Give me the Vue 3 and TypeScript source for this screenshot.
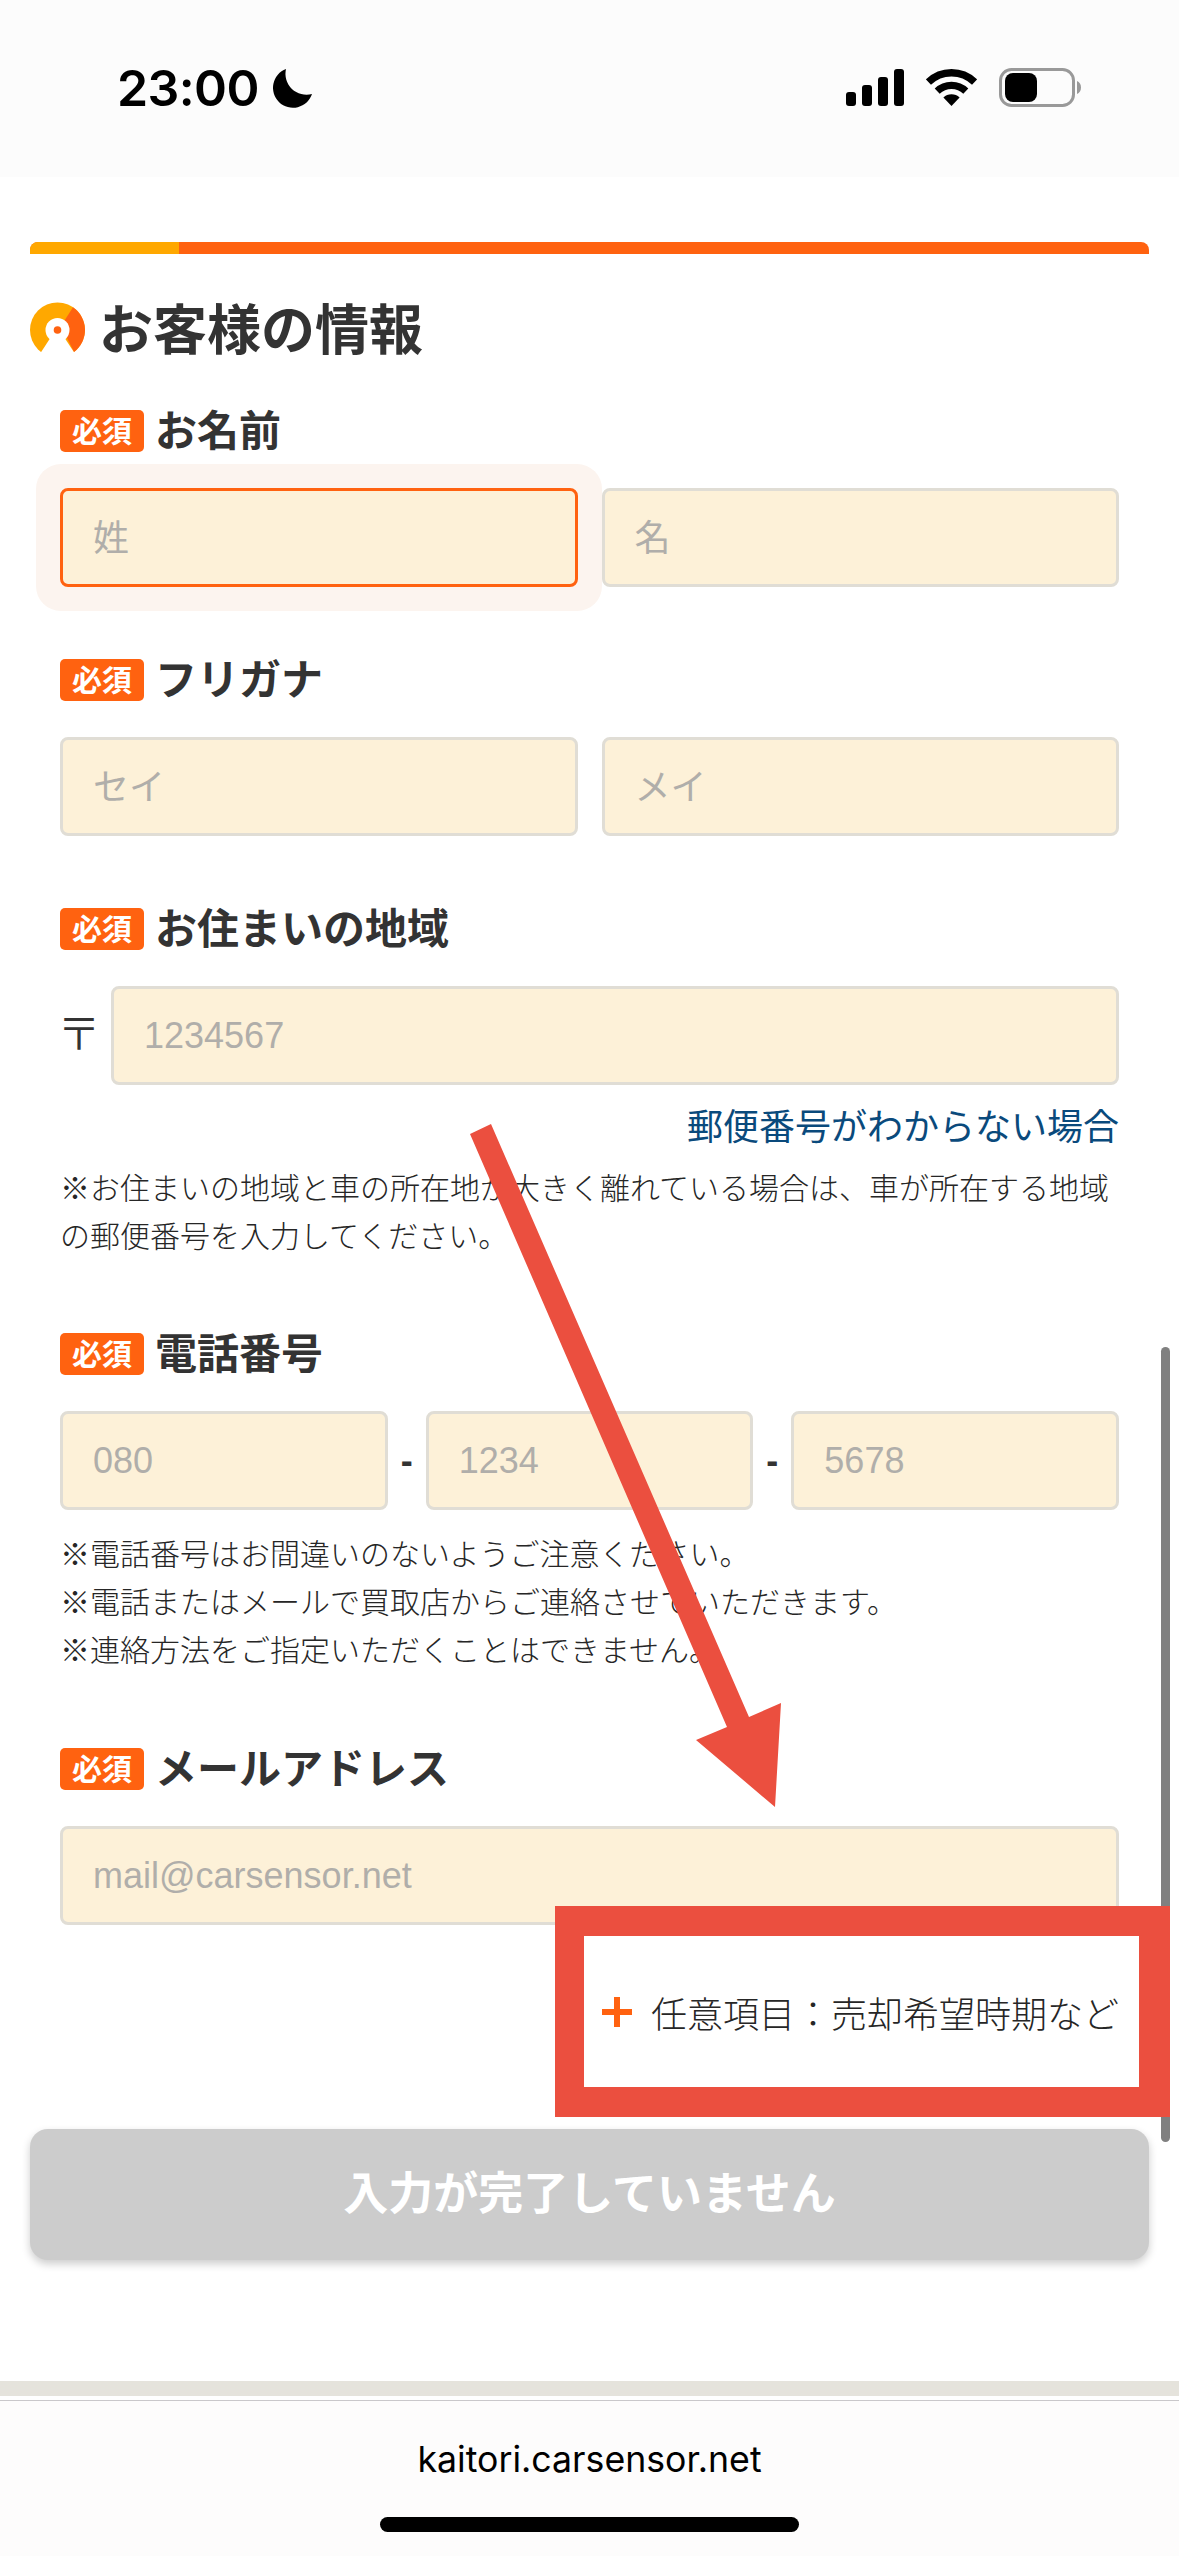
<script setup lang="ts">
const phoneNotes: string[] = [
  '※電話番号はお間違いのないようご注意ください。',
  '※電話またはメールで買取店からご連絡させていただきます。',
  '※連絡方法をご指定いただくことはできません。',
];
</script>

<template>
  <div class="screen">
    <header class="status">
      <div class="status__left">
        <span class="status__time">23:00</span>
        <svg class="status__moon" width="39" height="39" viewBox="0 0 39 39">
          <path d="M13 0A20 20 0 1 0 39 25A21 21 0 0 1 13 0Z" />
        </svg>
      </div>
      <div class="status__right">
        <svg width="58" height="37" viewBox="0 0 58 37">
          <rect x="0" y="23" width="10" height="14" rx="3" />
          <rect x="16" y="16" width="10" height="21" rx="3" />
          <rect x="32" y="8" width="10" height="29" rx="3" />
          <rect x="48" y="0" width="10" height="37" rx="3" />
        </svg>
        <svg class="status__wifi" width="51" height="37" viewBox="0 0 51 37">
          <path d="M2.4 13.1A33.2 33.2 0 0 1 48.6 13.1" fill="none" stroke="#000" stroke-width="7.4" />
          <path d="M11.2 22.2A20.6 20.6 0 0 1 39.8 22.2" fill="none" stroke="#000" stroke-width="7.2" />
          <path d="M25.5 37L17.4 28.6A11.7 11.7 0 0 1 33.6 28.6Z" />
        </svg>
        <svg class="status__battery" width="82" height="39" viewBox="0 0 82 39">
          <rect x="1.5" y="1.5" width="73" height="36" rx="11" fill="none" stroke="#999" stroke-width="3" />
          <rect x="6" y="5" width="32" height="29" rx="8" />
          <path d="M78 13C80.5 14 82 16.5 82 19.5C82 22.5 80.5 25 78 26Z" fill="#999" />
        </svg>
      </div>
    </header>

    <main class="form">
      <div class="progress"><span class="progress__done"></span></div>

      <h1 class="title">
        <svg class="title__icon" width="55" height="50" viewBox="0 0 55 50">
          <circle cx="27.5" cy="28" r="27.5" fill="#ffa800" />
          <path d="M31 24L43 5.3A27.5 27.5 0 0 1 44 50Z" fill="#ff6210" />
          <path d="M27.5 25L10.5 51H44.5Z" fill="#fff" />
          <circle cx="27.5" cy="28" r="12" fill="#fff" />
          <circle cx="27.5" cy="28" r="3.8" fill="#ff6210" />
        </svg>
        お客様の情報
      </h1>

      <section class="field field--first">
        <div class="label"><span class="badge">必須</span>お名前</div>
        <div class="inputs">
          <input class="input input--focus" placeholder="姓" />
          <input class="input" placeholder="名" />
        </div>
      </section>

      <section class="field">
        <div class="label"><span class="badge">必須</span>フリガナ</div>
        <div class="inputs">
          <input class="input" placeholder="セイ" />
          <input class="input" placeholder="メイ" />
        </div>
      </section>

      <section class="field">
        <div class="label"><span class="badge">必須</span>お住まいの地域</div>
        <div class="inputs inputs--zip">
          <span class="zip-mark">〒</span>
          <input class="input input--latin" placeholder="1234567" />
        </div>
        <a class="zip-link">郵便番号がわからない場合</a>
        <p class="note note--zip">※お住まいの地域と車の所在地が大きく離れている場合は、車が所在する地域の郵便番号を入力してください。</p>
      </section>

      <section class="field field--phone">
        <div class="label"><span class="badge">必須</span>電話番号</div>
        <div class="inputs inputs--phone">
          <input class="input input--latin" placeholder="080" />
          <span class="dash">-</span>
          <input class="input input--latin" placeholder="1234" />
          <span class="dash">-</span>
          <input class="input input--latin" placeholder="5678" />
        </div>
        <p class="note note--phone">
          <span v-for="line in phoneNotes" :key="line" class="note__line">{{ line }}</span>
        </p>
      </section>

      <section class="field field--mail">
        <div class="label"><span class="badge">必須</span>メールアドレス</div>
        <div class="inputs">
          <input class="input input--latin" placeholder="mail@carsensor.net" />
        </div>
      </section>

      <div class="optional">
        <span class="optional__plus"></span>
        任意項目：売却希望時期など
      </div>

      <button class="submit" type="button">入力が完了していません</button>
    </main>

    <footer class="browser">
      <div class="browser__stripe"></div>
      <div class="browser__bar">
        <span class="browser__url">kaitori.carsensor.net</span>
        <span class="browser__home"></span>
      </div>
    </footer>

    <!-- scrollbar and the red markup drawn over the screenshot -->
    <span class="scrollbar"></span>
    <svg class="markup" width="1179" height="2556" viewBox="0 0 1179 2556">
      <path d="M491 1124L470 1134L727 1727L696 1740L775 1807L781 1703L749 1717Z" fill="#eb4f3f" />
    </svg>
    <div class="markup-box"></div>
  </div>
</template>

<style scoped>
.screen {
  position: relative;
  width: 1179px;
  height: 2556px;
  overflow: hidden;
  background: #fff;
  color: #333;
  font-family: "Noto Sans CJK JP", "Liberation Sans", sans-serif;
}

.status {
  height: 177px;
  box-sizing: border-box;
  padding: 68px 98px 0 117px;
  display: flex;
  justify-content: space-between;
  align-items: flex-start;
  background: #fcfcfc;
  color: #000;
}
.status__left {
  display: flex;
  align-items: center;
  height: 40px;
}
.status__time {
  font-family: Inter, "Liberation Sans", sans-serif;
  font-size: 50px;
  font-weight: 600;
  line-height: 40px;
  letter-spacing: -0.6px;
}
.status__moon {
  margin-left: 14px;
}
.status__right {
  display: flex;
  align-items: flex-start;
  padding-top: 1px;
}
.status__wifi {
  margin-left: 22px;
}
.status__battery {
  margin-left: 22px;
  margin-top: -1px;
}

.form {
  height: 2204px;
  box-sizing: border-box;
  padding: 65px 30px 0;
}
.progress {
  height: 12px;
  border-radius: 8px 8px 0 0;
  overflow: hidden;
  background: #ff6210;
}
.progress__done {
  display: block;
  width: 149px;
  height: 100%;
  background: #ffa800;
}
.title {
  margin: 48px 0 0;
  height: 55px;
  display: flex;
  align-items: flex-start;
  font-size: 54px;
  line-height: 49px;
  font-weight: 700;
}
.title__icon {
  margin-right: 14px;
}

.field {
  margin: 72px 30px 0;
}
.field--first {
  margin-top: 53px;
}
.field--phone {
  margin-top: 75px;
}
.field--mail {
  margin-top: 76px;
}
.label {
  height: 42px;
  display: flex;
  align-items: flex-start;
  font-size: 42px;
  line-height: 36px;
  font-weight: 700;
}
.badge {
  width: 84px;
  height: 42px;
  margin-right: 11px;
  border-radius: 5px;
  background: #ff6210;
  color: #fff;
  font-size: 30px;
  font-weight: 700;
  line-height: 38px;
  text-align: center;
}
.inputs {
  margin-top: 36px;
  display: flex;
  gap: 24px;
}
.input {
  flex: 1;
  min-width: 0;
  height: 99px;
  box-sizing: border-box;
  padding: 2px 30px 0;
  border: 3px solid #e0ddd5;
  border-radius: 8px;
  background: #fdf1d8;
  color: #333;
  font-family: "Liberation Sans", "Noto Sans CJK JP", sans-serif;
  font-size: 36px;
  outline: none;
}
.input::placeholder {
  color: #b0aeaa;
  opacity: 1;
}
.input--latin {
  padding-top: 0;
}
.input--focus {
  border-color: #ff6210;
  box-shadow: 0 0 0 24px #fcf4ef;
}

.inputs--zip {
  gap: 0;
  align-items: center;
}
.zip-mark {
  width: 51px;
  height: 99px;
  margin-left: -3px;
  margin-right: 3px;
  font-size: 44px;
  font-weight: 300;
  line-height: 90px;
}
.zip-link {
  display: block;
  margin-top: 15px;
  color: #0a4a7c;
  font-size: 36px;
  line-height: 48px;
  text-align: right;
}
.note {
  margin: 14px 0 0;
  color: #262626;
  font-size: 30px;
  font-weight: 300;
  line-height: 48px;
}
.note--phone {
  margin-top: 18px;
}
.note__line {
  display: block;
}

.inputs--phone {
  gap: 0;
}
.dash {
  width: 38px;
  font-family: "Liberation Sans", sans-serif;
  font-size: 36px;
  font-weight: 700;
  line-height: 99px;
  text-align: center;
}

.optional {
  margin: 64px 30px 0 0;
  height: 46px;
  display: flex;
  justify-content: flex-end;
  align-items: center;
  color: #262626;
  font-size: 36px;
  font-weight: 300;
  line-height: 44px;
}
.optional__plus {
  width: 30px;
  height: 30px;
  margin-right: 19px;
  background:
    linear-gradient(#ff6210, #ff6210) center / 100% 6px no-repeat,
    linear-gradient(#ff6210, #ff6210) center / 6px 100% no-repeat;
  border-radius: 3px;
}

.submit {
  display: block;
  width: 100%;
  height: 131px;
  margin-top: 94px;
  padding: 0 0 8px;
  border: 0;
  border-radius: 18px;
  background: #ccc;
  box-shadow: 0 4px 8px rgba(0, 0, 0, 0.2);
  color: #fff;
  font-family: inherit;
  font-size: 45px;
  font-weight: 700;
}

.browser {
  height: 175px;
}
.browser__stripe {
  height: 15px;
  background: #e5e3dc;
  border-bottom: 4px solid #fff;
}
.browser__bar {
  height: 155px;
  border-top: 1px solid #c9c7ca;
  background: #fdfcfc;
  display: flex;
  flex-direction: column;
  align-items: center;
}
.browser__url {
  margin-top: 37px;
  color: #000;
  font-family: Inter, "Liberation Sans", sans-serif;
  font-size: 35.7px;
  line-height: 42px;
}
.browser__home {
  width: 419px;
  height: 15px;
  margin-top: 37px;
  border-radius: 8px;
  background: #000;
}

.scrollbar {
  position: absolute;
  left: 1161px;
  top: 1347px;
  width: 9px;
  height: 795px;
  border-radius: 5px;
  background: #808080;
}
.markup {
  position: absolute;
  left: 0;
  top: 0;
  pointer-events: none;
}
.markup-box {
  position: absolute;
  left: 555px;
  top: 1906px;
  width: 615px;
  height: 211px;
  box-sizing: border-box;
  border-style: solid;
  border-color: #eb4f3f;
  border-width: 30px 31px 30px 29px;
}
</style>
